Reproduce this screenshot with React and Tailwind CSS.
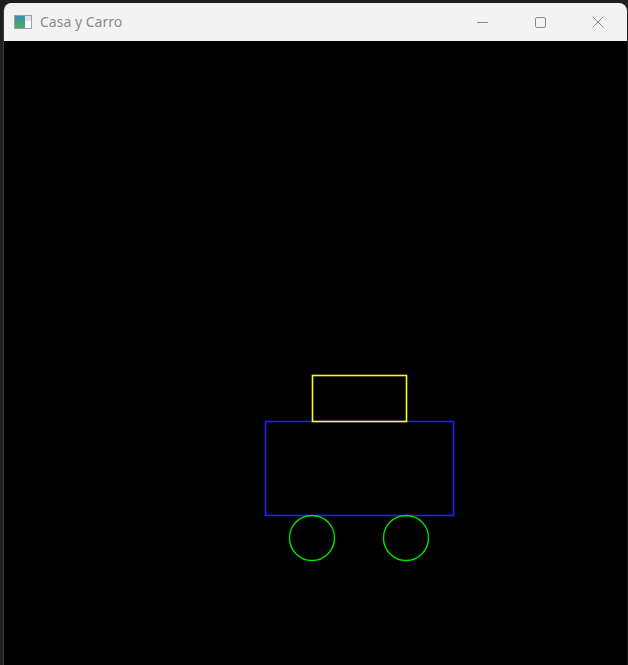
export default function App() {
  return (
    <div className="w-[628px] h-[665px] bg-[#1f1f1f] overflow-hidden relative">
      <div className="absolute left-[3px] top-[3px] w-[624px] h-[662px] flex flex-col rounded-t-[8px] overflow-hidden border-l border-[#3a3a3a]">
        <div className="h-[38px] bg-[#f3f3f3] flex items-center shrink-0" style={{ fontFamily: '"Noto Sans", "Open Sans", sans-serif' }}>
          <div className="ml-[10px] w-[18px] h-[14px] border border-[#9aa0a6] flex bg-white">
            <div className="w-[10px] h-full bg-gradient-to-b from-[#3a8fb5] to-[#4caf50]"></div>
            <div className="flex-1 flex flex-col">
              <div className="h-[5px] bg-[#dfe4e8]"></div>
            </div>
          </div>
          <span className="ml-[8px] text-[14px] text-[#8a8a8a] leading-none">Casa y Carro</span>
          <div className="ml-auto flex items-center h-full">
            <div className="w-[58px] h-full flex items-center justify-center">
              <div className="w-[11px] h-px bg-[#8c8c8c]"></div>
            </div>
            <div className="w-[58px] h-full flex items-center justify-center">
              <div className="w-[11px] h-[11px] border border-[#8c8c8c] rounded-[2px]"></div>
            </div>
            <div className="w-[58px] h-full flex items-center justify-center">
              <svg width="12" height="12" viewBox="0 0 12 12">
                <path d="M0.5 0.5 L11.5 11.5 M11.5 0.5 L0.5 11.5" stroke="#8c8c8c" strokeWidth="1" />
              </svg>
            </div>
          </div>
        </div>
        <div className="flex-1 bg-black">
          <svg width="623" height="624" viewBox="4 41 623 624" className="block">
            <rect x="265.5" y="421.5" width="188" height="94" fill="none" stroke="#2020ff" strokeWidth="1.6" />
            <rect x="312.5" y="375.5" width="94" height="46" fill="none" stroke="#ffff00" strokeWidth="1.6" />
            <circle cx="312" cy="538" r="22.5" fill="none" stroke="#00e000" strokeWidth="1.4" />
            <circle cx="406" cy="538" r="22.5" fill="none" stroke="#00e000" strokeWidth="1.4" />
          </svg>
        </div>
      </div>
    </div>
  );
}
